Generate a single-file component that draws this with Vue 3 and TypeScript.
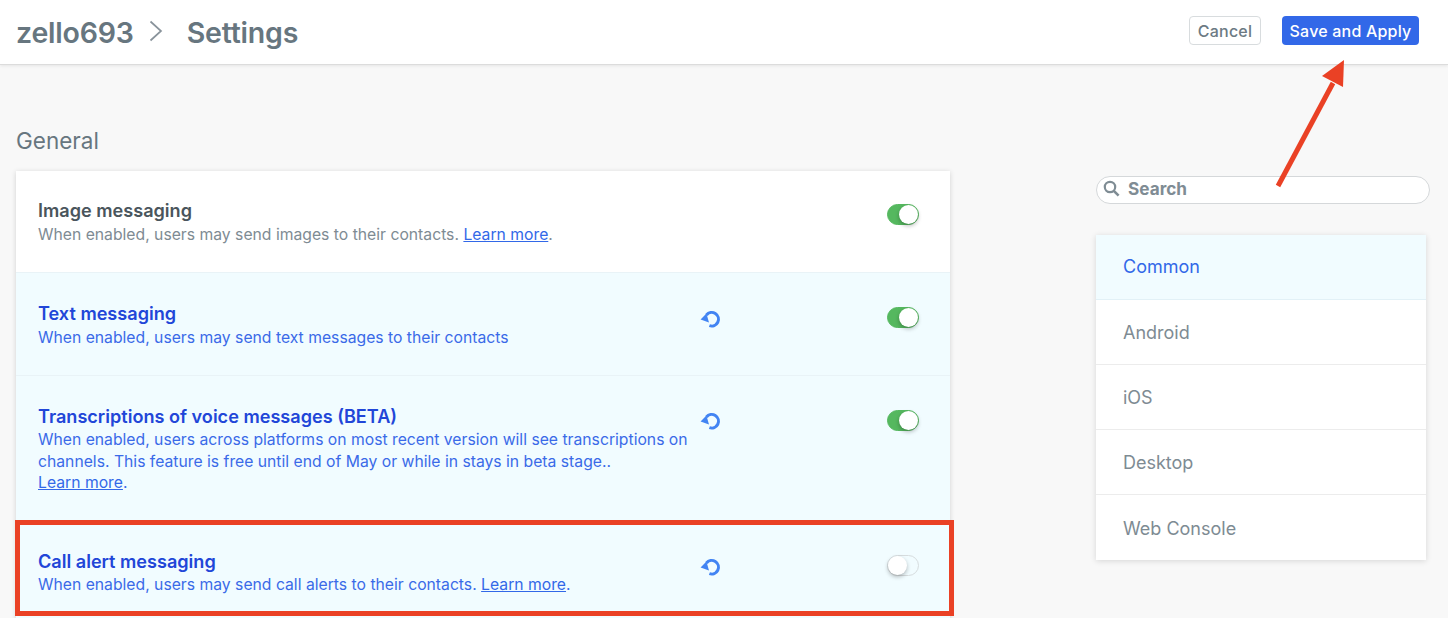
<script setup lang="ts">
interface Row {
  title: string
  lines: string
  link?: string
  tail?: string
  changed: boolean
  on: boolean
  cls: string
  breakBeforeLink?: boolean
}
const rows: Row[] = [
  { title: 'Image messaging', lines: 'When enabled, users may send images to their contacts. ', link: 'Learn more', tail: '.', changed: false, on: true, cls: 'r1' },
  { title: 'Text messaging', lines: 'When enabled, users may send text messages to their contacts', changed: true, on: true, cls: 'r2' },
  { title: 'Transcriptions of voice messages (BETA)', lines: 'When enabled, users across platforms on most recent version will see transcriptions on channels. This feature is free until end of May or while in stays in beta stage..', link: 'Learn more', tail: '.', changed: true, on: true, cls: 'r3', breakBeforeLink: true },
  { title: 'Call alert messaging', lines: 'When enabled, users may send call alerts to their contacts. ', link: 'Learn more', tail: '.', changed: true, on: false, cls: 'r4' },
]
const menu = ['Common', 'Android', 'iOS', 'Desktop', 'Web Console']
</script>

<template>
  <div class="page">
    <header class="top">
      <div class="crumbs">
        <span class="crumb">zello693</span>
        <svg class="chev" width="14" height="22" viewBox="0 0 14 22"><path d="M1.5 1.5 L12 11 L1.5 20.5" fill="none" stroke="#89939b" stroke-width="1.7" /></svg>
        <span class="crumb">Settings</span>
      </div>
      <div class="actions">
        <button class="btn cancel">Cancel</button>
        <button class="btn save">Save and Apply</button>
      </div>
    </header>

    <main class="body">
      <section class="left">
        <h2 class="heading">General</h2>
        <div class="card">
          <div v-for="r in rows" :key="r.title" class="row" :class="[r.cls, { changed: r.changed }]">
            <div class="text">
              <div class="title">{{ r.title }}</div>
              <div class="desc">{{ r.lines }}<br v-if="r.breakBeforeLink" /><a v-if="r.link" class="link">{{ r.link }}</a>{{ r.tail }}</div>
            </div>
            <div class="undo">
              <svg v-if="r.changed" width="22" height="20" viewBox="0 0 22 20"><path d="M7.4 5 A6.8 6.8 0 1 1 10.4 15.7" fill="none" stroke="#4284f3" stroke-width="3" /><path d="M1.6 9.4 L7.4 3.4 L10 12.6 Z" fill="#4284f3" /></svg>
            </div>
            <div class="toggle" :class="{ on: r.on }"><span class="knob"></span></div>
          </div>
        </div>
      </section>

      <aside class="right">
        <div class="search">
          <svg width="17" height="17" viewBox="0 0 17 17"><circle cx="7" cy="7" r="5.2" fill="none" stroke="#7f8c94" stroke-width="2.2" /><path d="M10.8 10.8 L15.6 15.6" stroke="#7f8c94" stroke-width="2.6" /></svg>
          <span>Search</span>
        </div>
        <nav class="menu">
          <div v-for="(m, i) in menu" :key="m" class="item" :class="'i' + i">{{ m }}</div>
        </nav>
      </aside>
    </main>

    <div class="redbox"></div>
    <svg class="arrow" width="80" height="135" viewBox="0 0 80 135">
      <path d="M3 129 L58 26" stroke="#ea4125" stroke-width="5" fill="none" />
      <path d="M69 3 L47 19 L68 30 Z" fill="#ea4125" />
    </svg>
  </div>
</template>

<style>
html, body { margin: 0; background: #f7f7f7; }
</style>

<style scoped>
.page {
  position: relative;
  height: 618px;
  overflow: hidden;
  background: #f8f8f8;
  font-family: Inter, "Liberation Sans", sans-serif;
}
.top {
  height: 64px;
  background: #fff;
  border-bottom: 1px solid #dcdcdc;
  box-shadow: 0 1px 3px rgba(0, 0, 0, 0.08);
  display: flex;
  align-items: center;
  justify-content: space-between;
  padding: 0 29px 0 16px;
}
.crumbs { display: flex; align-items: center; }
.crumb { font-size: 28.5px; font-weight: 600; color: #67767f; letter-spacing: -0.2px; }
.chev { margin: -2px 24px 0 15px; }
.actions { display: flex; gap: 21px; align-items: center; margin-top: -3px; }
.btn {
  font-family: inherit;
  font-size: 16px;
  height: 29px;
  border-radius: 4px;
  padding: 0;
  letter-spacing: 0.2px;
}
.cancel { width: 72px; background: #fff; border: 1px solid #d8dcde; color: #6c7a83; font-weight: 500; }
.save { width: 137px; background: #3268e8; border: none; color: #fff; font-weight: 500; }
.body {
  display: flex;
  padding: 0 18px 0 16px;
  justify-content: space-between;
}
.left { width: 934px; }
.heading {
  margin: 63px 0 17px;
  font-size: 22.5px;
  line-height: 26px;
  font-weight: 400;
  color: #67767f;
}
.card { background: #fff; box-shadow: 0 1px 5px rgba(0, 0, 0, 0.16); }
.row {
  display: flex;
  box-sizing: border-box;
  padding-left: 22px;
  border-bottom: 1px solid #e9f3f7;
}
.r1 { height: 102px; padding-top: 29px; }
.r2 { height: 103px; padding-top: 30px; }
.r3 { height: 145px; padding-top: 30px; }
.r4 { height: 100px; padding-top: 30px; border-bottom: none; }
.changed { background: #f1fcff; }
.text { width: 652px; }
.title { font-size: 18.1px; line-height: 20px; font-weight: 600; color: #4a555c; }
.desc { font-size: 15.72px; line-height: 21.5px; color: #7e8b93; margin-top: 4px; }
.r3 .desc, .r4 .desc { margin-top: 3px; }
.changed .title { color: #2146d8; }
.changed .desc { color: #3a6ae8; }
.link { color: #3268e8; text-decoration: underline; }
.undo { width: 22px; height: 20px; margin: 7px 0 0 9px; flex: none; }
.r3 .undo { margin-top: 6px; }
.toggle {
  position: relative;
  flex: none;
  box-sizing: border-box;
  width: 32px;
  height: 21px;
  margin: 4px 0 0 166px;
  border-radius: 11px;
  background: transparent;
  border: 1px solid #d6dcde;
}
.toggle.on { background: #55b85f; border-color: #55b85f; }
.knob {
  position: absolute;
  top: 0;
  left: 0;
  width: 19px;
  height: 19px;
  border-radius: 50%;
  background: #fff;
  box-shadow: 0 2px 4px rgba(0, 0, 0, 0.28);
}
.toggle.on .knob { left: 11px; }
.right { width: 334px; padding-top: 111px; }
.search {
  box-sizing: border-box;
  height: 28px;
  border: 1px solid #d5d8da;
  border-radius: 14px;
  background: #fff;
  display: flex;
  align-items: center;
  gap: 8px;
  padding: 0 0 3px 6px;
  font-size: 17.2px;
  font-weight: 700;
  color: #7f8c94;
}
.menu {
  margin-top: 31px;
  width: 330px;
  background: #fff;
  box-shadow: 0 1px 6px rgba(0, 0, 0, 0.14);
}
.item {
  box-sizing: border-box;
  height: 65px;
  padding: 0 27px;
  display: flex;
  align-items: center;
  font-size: 18px;
  color: #7e8b93;
  border-bottom: 1px solid #ececec;
}
.i0 { background: #f1fcff; color: #3268e8; border-bottom-color: #e2f1f7; padding-bottom: 2px; }
.i4 { border-bottom: none; padding-top: 2px; }
.redbox {
  position: absolute;
  left: 15px;
  top: 520px;
  width: 939px;
  height: 96px;
  box-sizing: border-box;
  border: 5px solid #ea4125;
}
.arrow { position: absolute; left: 1275px; top: 57px; }
</style>
